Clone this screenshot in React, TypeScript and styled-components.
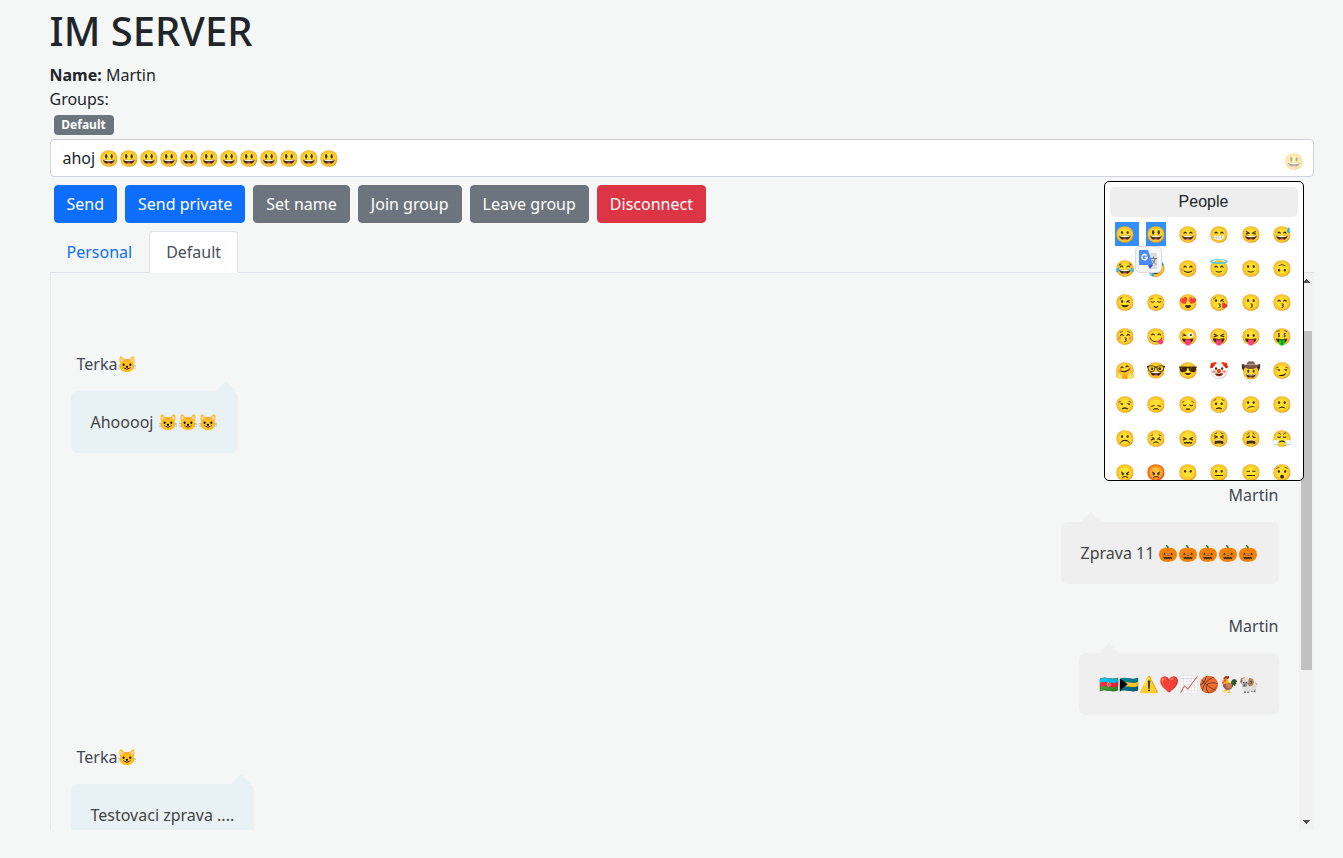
import React from "react";
import styled, { createGlobalStyle } from "styled-components";

const GlobalStyle = createGlobalStyle`
  *, *::before, *::after { box-sizing: border-box; }
  body {
    margin: 0;
    background: #f4f7f6;
    color: #212529;
    font: 400 16px/1.5 "Noto Sans", sans-serif;
  }
`;

const Page = styled.main`
  display: flex;
  flex-direction: column;
  height: 858px;
  padding: 7px 29.5px 28px 49.5px;
  overflow: hidden;
`;

const Title = styled.h1`
  margin: 0 0 8px;
  font-size: 40px;
  font-weight: 500;
  line-height: 48px;
`;

const InfoLine = styled.div`
  height: 24px;
`;

const Groups = styled.div`
  display: flex;
  padding: 4px;
`;

const Badge = styled.span`
  padding: 4.2px 8.2px 4.2px 7.8px;
  border-radius: 4px;
  background: #6c757d;
  color: #fff;
  font-size: 12px;
  font-weight: 700;
  line-height: 12px;
  height: 20px;
`;

const Composer = styled.div`
  position: relative;
`;

const MessageField = styled.div`
  display: flex;
  justify-content: space-between;
  height: 38px;
  padding: 6px 8.5px 6px 12px;
  border: 1px solid #ced4da;
  border-radius: 4px;
  background: #fff;
`;

const PickerToggle = styled.span`
  padding-top: 3px;
  opacity: 0.4;
`;

const Picker = styled.div`
  position: absolute;
  z-index: 2;
  top: 42px;
  right: 10px;
  width: 200px;
  height: 300px;
  padding: 5px;
  overflow: hidden;
  border: 1px solid #000;
  border-radius: 5px;
  background: #fff;
`;

const Category = styled.div`
  height: 30px;
  border-radius: 5px;
  background: #eee;
  font-family: "Liberation Sans", Arial, sans-serif;
  line-height: 29px;
  text-align: center;
`;

const EmojiGrid = styled.div`
  display: grid;
  grid-template-columns: repeat(6, 31.5px);
`;

const EmojiCell = styled.span`
  height: 34px;
  padding: 5px;
  white-space: pre;
`;

const Selected = styled.span<{ $wide?: boolean }>`
  display: block;
  width: ${(p) => (p.$wide ? 24 : 20)}px;
  height: 24px;
  background: #338fff;
`;

const TranslateBubble = styled.div`
  position: absolute;
  top: 64px;
  left: 30px;
  width: 27px;
  height: 27px;
  border: 1px solid #dcdcdc;
  border-radius: 5px;
  background: #f7f7f7;
`;

const Actions = styled.div`
  display: flex;
  gap: 8px;
  padding: 8px 4px;
`;

const tones = { primary: "#0d6efd", secondary: "#6c757d", danger: "#dc3545" };

const Button = styled.button<{ $tone: keyof typeof tones }>`
  height: 38px;
  padding: 6px 12px;
  border: 1px solid ${(p) => tones[p.$tone]};
  border-radius: 4px;
  background: ${(p) => tones[p.$tone]};
  color: #fff;
  font: inherit;
`;

const Tabs = styled.nav`
  display: flex;
  height: 42px;
  border-bottom: 1px solid #dee2e6;
`;

const Tab = styled.a<{ $active?: boolean }>`
  height: 42px;
  padding: 8px 16px;
  border: 1px solid;
  border-color: ${(p) => (p.$active ? "#dee2e6 #dee2e6 #fff" : "transparent")};
  border-radius: 4px 4px 0 0;
  background: ${(p) => (p.$active ? "#fff" : "transparent")};
  color: ${(p) => (p.$active ? "#495057" : "#0d6efd")};
`;

const Chat = styled.section`
  display: flex;
  flex: 1;
  min-height: 0;
  border-left: 1px solid #e9ecec;
`;

const History = styled.ul`
  flex: 1;
  margin: 0;
  padding: 79px 20px 0;
  overflow: hidden;
  list-style: none;
`;

const Message = styled.li<{ $mine?: boolean }>`
  display: flex;
  flex-direction: column;
  align-items: ${(p) => (p.$mine ? "flex-end" : "flex-start")};
  margin-bottom: 30px;
`;

const Author = styled.span`
  height: 24px;
  margin-bottom: 15px;
  padding-left: 6px;
  color: #434651;
`;

const Bubble = styled.div<{ $mine?: boolean }>`
  position: relative;
  padding: 18px 20px;
  border-radius: 7px;
  background: ${(p) => (p.$mine ? "#efefef" : "#e8f1f3")};
  color: #444;
  line-height: 26px;

  &::after {
    content: "";
    position: absolute;
    bottom: 100%;
    left: ${(p) => (p.$mine ? "30px" : "93%")};
    margin-left: -10px;
    border: 10px solid transparent;
    border-bottom-color: ${(p) => (p.$mine ? "#efefef" : "#e8f1f3")};
  }
`;

const ScrollTrack = styled.div`
  display: flex;
  flex-direction: column;
  align-items: center;
  width: 15px;
  padding: 6px 0;
  background: #f1f1f1;
`;

const ScrollArrow = styled.svg`
  display: block;
  width: 7px;
  height: 4px;
  fill: #505050;
`;

const ScrollThumb = styled.div`
  width: 11px;
  height: 339px;
  margin: 48px 0 auto;
  background: #c1c1c1;
`;

const emojis = [
  "😄", "😁", "😆", "😅",
  "😂", "🤣", "😊", "😇", "🙂", "🙃",
  "😉", "😌", "😍", "😘", "😗", "😙",
  "😚", "😋", "😜", "😝", "😛", "🤑",
  "🤗", "🤓", "😎", "🤡", "🤠", "😏",
  "😒", "😞", "😔", "😟", "😕", "🙁",
  "☹️", "😣", "😖", "😫", "😩", "😤",
  "😠", "😡", "😶", "😐", "😑", "😯",
];

const messages = [
  { author: "Terka😺", text: "Ahooooj 😺😺😺", mine: false },
  { author: "Martin", text: "Zprava 11 🎃🎃🎃🎃🎃", mine: true },
  { author: "Martin", text: "🇦🇿🇧🇸⚠️❤️📈🏀🐓🐏", mine: true },
  { author: "Terka😺", text: "Testovaci zprava ....", mine: false },
];

function TranslateIcon() {
  return (
    <svg width="25" height="25" viewBox="0 0 25 25">
      <path d="M9 6h11q1 0 1 1v14q0 1-1 1h-6z" fill="#dcdcdc" />
      <path d="M12 18h5l-3 4z" fill="#3457c5" />
      <path d="M4 3h8l5 15H4q-1 0-1-1V4q0-1 1-1z" fill="#4c8bf5" />
      <path d="M15 11.500h6M17.500 9.500v2M19.500 11.500q-1 4-4 6M16.500 13q1 2.500 3.500 4.500" stroke="#60737e" fill="none" />
      <path d="M10.700 8.500a2.700 2.700 0 1 0 .6 2H8.700" stroke="#fff" strokeWidth="1.300" fill="none" />
    </svg>
  );
}

export default function App() {
  return (
    <Page>
      <GlobalStyle />
      <Title>IM SERVER</Title>
      <InfoLine><b>Name:</b> Martin</InfoLine>
      <InfoLine>Groups:</InfoLine>
      <Groups><Badge>Default</Badge></Groups>
      <Composer>
        <MessageField>
          <span>ahoj 😃😃😃😃😃😃😃😃😃😃😃😃</span>
          <PickerToggle>😃</PickerToggle>
        </MessageField>
        <Picker>
          <Category>People</Category>
          <EmojiGrid>
            <EmojiCell><Selected $wide>😀</Selected></EmojiCell>
            <EmojiCell><Selected>😃</Selected></EmojiCell>
            {emojis.map((e) => <EmojiCell key={e}>{e}</EmojiCell>)}
          </EmojiGrid>
          <TranslateBubble><TranslateIcon /></TranslateBubble>
        </Picker>
      </Composer>
      <Actions>
        <Button $tone="primary">Send</Button>
        <Button $tone="primary">Send private</Button>
        <Button $tone="secondary">Set name</Button>
        <Button $tone="secondary">Join group</Button>
        <Button $tone="secondary">Leave group</Button>
        <Button $tone="danger">Disconnect</Button>
      </Actions>
      <Tabs>
        <Tab>Personal</Tab>
        <Tab $active>Default</Tab>
      </Tabs>
      <Chat>
        <History>
          {messages.map((m, i) => (
            <Message key={i} $mine={m.mine}>
              <Author>{m.author}</Author>
              <Bubble $mine={m.mine}>{m.text}</Bubble>
            </Message>
          ))}
        </History>
        <ScrollTrack>
          <ScrollArrow viewBox="0 0 7 4"><path d="M3 0h1v1h1v1h1v1h1v1H0V3h1V2h1V1h1z" /></ScrollArrow>
          <ScrollThumb />
          <ScrollArrow viewBox="0 0 7 4"><path d="M0 0h7v1H6v1H5v1H4v1H3V3H2V2H1V1H0z" /></ScrollArrow>
        </ScrollTrack>
      </Chat>
    </Page>
  );
}
